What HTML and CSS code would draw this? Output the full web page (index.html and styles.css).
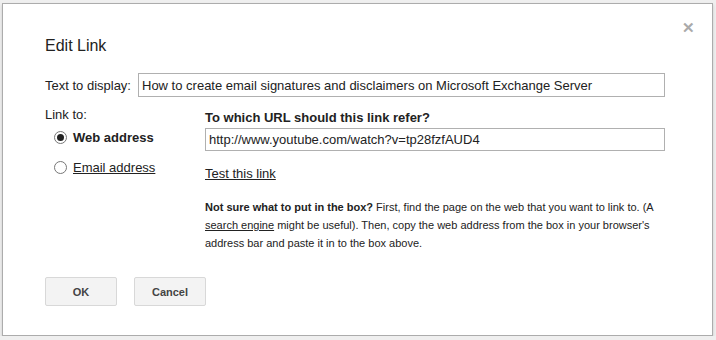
FILE: index.html
```html
<!DOCTYPE html>
<html lang="en">
<head>
<meta charset="UTF-8">
<title>Edit Link</title>
<link rel="stylesheet" href="styles.css">
</head>
<body>
  <div class="dialog">
    <span class="close">&#x2715;</span>
    <h1 class="title">Edit Link</h1>

    <div class="row">
      <label class="label">Text to display:</label>
      <input class="field field-text" type="text" value="How to create email signatures and disclaimers on Microsoft Exchange Server">
    </div>

    <div class="link-area">
      <div class="link-side">
        <div class="label">Link to:</div>
        <div class="radio-row checked">
          <span class="radio"></span>
          <span class="radio-label">Web address</span>
        </div>
        <div class="radio-row">
          <span class="radio"></span>
          <a class="radio-label link">Email address</a>
        </div>
      </div>
      <div class="link-main">
        <div class="url-title">To which URL should this link refer?</div>
        <input class="field field-url" type="text" value="http://www.youtube.com/watch?v=tp28fzfAUD4">
        <a class="link test-link">Test this link</a>
        <p class="help"><b>Not sure what to put in the box?</b> First, find the page on the web that you want to link to. (A <a class="link">search engine</a> might be useful). Then, copy the web address from the box in your browser's address bar and paste it in to the box above.</p>
      </div>
    </div>

    <div class="buttons">
      <button class="btn">OK</button>
      <button class="btn">Cancel</button>
    </div>
  </div>
</body>
</html>
```

FILE: styles.css
```css
body {
  margin: 0;
  padding: 3px 0 0 2px;
  background: #efefef;
  font-family: Arial, "Liberation Sans", sans-serif;
  color: #222;
}

.dialog {
  position: relative;
  box-sizing: border-box;
  width: 711px;
  height: 333px;
  padding: 30px 0 0 42px;
  background: #fff;
  border: 1px solid #acacac;
  box-shadow: 0 2px 3px rgba(0, 0, 0, 0.15);
}

.close {
  position: absolute;
  top: 15px;
  right: 17px;
  font-size: 15px;
  font-weight: bold;
  color: #aaa;
}

.title {
  margin: 0 0 15px;
  font-size: 16px;
  font-weight: normal;
  line-height: 24px;
  color: #222;
}

.row {
  display: flex;
  align-items: center;
  gap: 7px;
}

.label {
  font-size: 13px;
  color: #222;
}

.field {
  box-sizing: border-box;
  height: 24px;
  padding: 0 3px;
  border: 1px solid #b0b0b0;
  font-family: Arial, "Liberation Sans", sans-serif;
  font-size: 13px;
  color: #222;
}

.field-text {
  width: 527px;
}

.link-area {
  display: flex;
  margin-top: 10px;
}

.link-side {
  width: 160px;
}

.radio-row {
  display: flex;
  align-items: center;
  gap: 6px;
  margin-left: 9px;
  font-size: 13px;
  height: 30px;
}

.radio-row:first-of-type {
  margin-top: 12px;
}

.radio {
  box-sizing: border-box;
  width: 13px;
  height: 13px;
  border: 1px solid #777;
  border-radius: 50%;
  background: #fff;
  position: relative;
}

.checked .radio::after {
  content: "";
  position: absolute;
  left: 2px;
  top: 2px;
  width: 7px;
  height: 7px;
  border-radius: 50%;
  background: #222;
}

.checked .radio-label {
  font-weight: bold;
}

.link {
  color: #222;
  text-decoration: underline;
}

.link-main {
  width: 460px;
}

.url-title {
  margin-top: 3px;
  font-size: 13px;
  font-weight: bold;
  line-height: 16px;
}

.field-url {
  display: block;
  width: 460px;
  height: 23px;
  margin-top: 2px;
}

.test-link {
  display: block;
  margin-top: 15px;
  font-size: 13px;
}

.help {
  margin: 17px 0 0;
  font-size: 11px;
  line-height: 18px;
}

.buttons {
  display: flex;
  gap: 17px;
  margin-top: 25px;
}

.btn {
  width: 72px;
  height: 29px;
  border: 1px solid #d8d8d8;
  border-radius: 2px;
  background: #f3f3f3;
  font-family: Arial, "Liberation Sans", sans-serif;
  font-size: 11px;
  font-weight: bold;
  color: #444;
}
```
